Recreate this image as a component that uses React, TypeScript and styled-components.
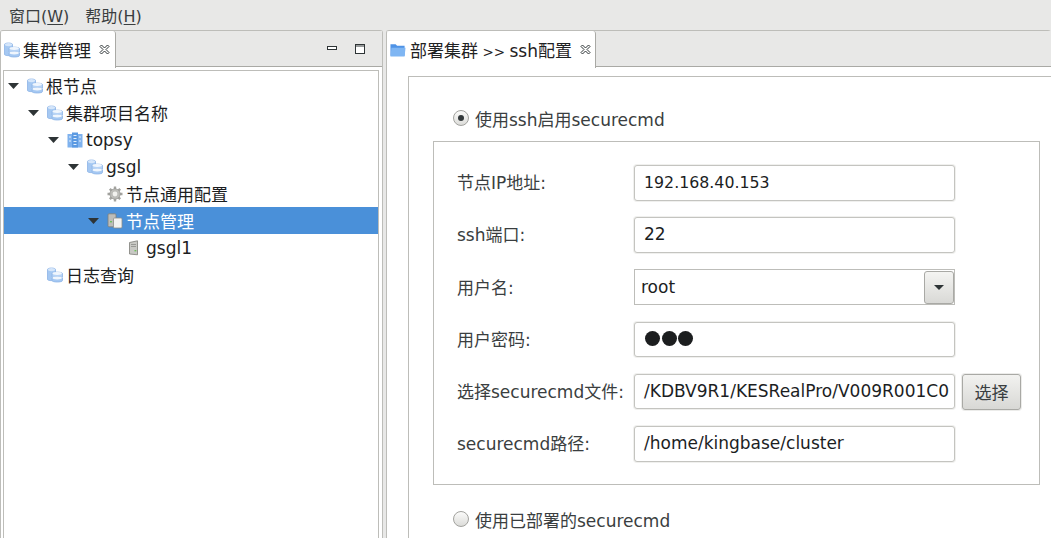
import React from "react";
import styled, { createGlobalStyle } from "styled-components";

const Global = createGlobalStyle`
  html, body { margin: 0; padding: 0; width: 1051px; height: 538px; overflow: hidden; background: #e8e8e7; }
  body { font-family: "DejaVu Sans", "Noto Sans CJK SC", sans-serif; font-size: 17px; color: #2e3436; }
`;

const Page = styled.div`
  display: flex; flex-direction: column; width: 1051px; height: 538px; overflow: hidden;
`;
const MenuBar = styled.div`
  display: flex; gap: 16px; height: 30px; padding-left: 9px; align-items: center; flex: none;
  font-size: 16px; color: #3a3e40;
  u { text-underline-offset: 2px; }
`;
const Panels = styled.div`
  flex: 1; display: flex; min-height: 0; gap: 3px;
`;
const Panel = styled.div<{ $w?: number }>`
  ${p => (p.$w ? `width: ${p.$w}px; flex: none;` : "flex: 1; min-width: 0;")}
  display: flex; flex-direction: column; border: 1px solid #bdbdb9; border-bottom: 0;
  border-radius: 3px 3px 0 0; background: #fff; position: relative; border-right-width: ${p => (p.$w ? 1 : 0)}px;
`;
const TabStrip = styled.div`
  display: flex; height: 36px; flex: none; background: #e8e8e7; align-items: stretch; position: relative;
`;
const Tab = styled.div<{ $w: number }>`
  width: ${p => p.$w}px; flex: none; background: #fff; display: flex; align-items: center; padding-left: 3px;
  border-right: 1px solid #a9a9a5; box-sizing: border-box; color: #1f2223; font-size: 17px; height: 37px;
  border-radius: 3px 3px 0 0; position: relative; z-index: 1; white-space: nowrap;
`;
const TabTitle = styled.span`
  word-spacing: -1px;
`;
const Arrows = styled.span`
  font-size: 13.5px;
`;
const StripRest = styled.div`
  flex: 1; border-bottom: 1px solid #a9a9a5; display: flex; justify-content: flex-end; align-items: center;
  gap: 18px; padding-right: 17px;
`;
const CloseWrap = styled.span`
  display: inline-flex; margin-left: 8px; margin-top: -1px;
`;
const TreeBox = styled.div`
  margin: 3px 3px 0 2px; flex: 1; border: 1px solid #bdbdb9; border-bottom: 0; background: #fff; padding-top: 1px;
`;
const Row = styled.div<{ $depth: number; $selected?: boolean }>`
  height: 27px; display: flex; align-items: center; padding-left: ${p => 3 + p.$depth * 20}px;
  background: ${p => (p.$selected ? "#4a90d9" : "transparent")};
  color: ${p => (p.$selected ? "#fff" : "#1c1e1f")}; font-size: 17px; white-space: nowrap;
`;
const Twist = styled.span`
  width: 12px; height: 6px; margin-right: 8px; flex: none; display: inline-flex; justify-content: center;
`;
const Spacer = styled.span`
  width: 20px; flex: none;
`;
const Glyph = styled.span`
  width: 16px; height: 16px; flex: none; margin-right: 3px; display: inline-flex;
`;
const TabGlyph = styled(Glyph)`
  margin-right: 4px;
`;
const Content = styled.div`
  flex: 1; min-height: 0; padding: 9px 0 0 21px; background: #fff; overflow: hidden;
`;
const Sheet = styled.div`
  width: 700px; height: 600px; border: 1px solid #bdbdb9; box-sizing: border-box; padding: 21px 0 0 24px;
`;
const RadioRow = styled.div<{ $mt?: number }>`
  display: flex; align-items: center; gap: 6px; height: 40px; padding-left: 21px; font-size: 17px; color: #3a3e40;
  margin-top: ${p => p.$mt ?? 0}px; white-space: nowrap;
`;
const Radio = styled.span<{ $on?: boolean }>`
  width: 16px; height: 16px; border-radius: 50%; border: 1px solid #a2a29e; box-sizing: border-box; flex: none; margin-left: -1px;
  background: linear-gradient(#fbfbfa, #dcdcd9); display: inline-flex; align-items: center; justify-content: center;
  &::after { content: ""; width: 6px; height: 6px; border-radius: 50%; background: ${p => (p.$on ? "#33393b" : "transparent")}; }
`;
const Group = styled.div`
  width: 607px; height: 344px; box-sizing: border-box; border: 1px solid #bdbdb9; margin-top: 3px;
  padding: 23px 0 0 23px; display: flex; flex-direction: column; gap: 16.6px;
`;
const FormRow = styled.div`
  display: flex; align-items: center; height: 35.6px; font-size: 17px; color: #3a3e40;
`;
const FieldLabel = styled.span`
  width: 177px; flex: none; white-space: nowrap; padding-bottom: 2px;
`;
const Input = styled.div<{ $numeric?: boolean }>`
  width: 321px; height: 100%; flex: none; box-sizing: border-box; border: 1px solid #c4c4c0; border-radius: 3px;
  box-shadow: 0 0 0 1px #f0f0ee; background: #fff; padding: 0 0 1px 9px; display: flex; align-items: center;
  font-size: ${p => (p.$numeric ? 15.8 : 17)}px; color: #1c1e1f; white-space: nowrap; overflow: hidden;
`;
const Select = styled(Input)`
  padding: 0 0 0 6px; justify-content: space-between; box-shadow: none;
  border-color: #bdbdb9; border-radius: 0;
`;
const Arrow = styled.div`
  width: 30px; height: 33px; border: 1px solid #a9a9a5; border-radius: 3px; box-sizing: border-box;
  background: linear-gradient(#f4f4f2, #d9d9d6); display: flex; align-items: center; justify-content: center;
`;
const Dots = styled.span`
  display: flex; gap: 1.5px; margin-left: 1px;
`;
const Dot = styled.span`
  width: 15px; height: 15px; border-radius: 50%; background: #1c1e1f;
`;
const PickButton = styled.div`
  width: 59px; height: 36px; margin-left: 7px; box-sizing: border-box; border: 1px solid #a9a9a5; border-radius: 3px;
  background: linear-gradient(#f2f2f0, #d8d8d5); display: flex; align-items: center; justify-content: center;
  font-size: 17px; color: #3a3e40; box-shadow: 0 0 0 1px #ececea;
`;

const Tri = () => (
  <svg width="11" height="6" viewBox="0 0 11 6"><path d="M0 0h11L5.5 6z" fill="#2e3436" /></svg>
);
const Cylinders = () => (
  <svg width="16" height="16" viewBox="0 0 16 16">
    <path d="M.5 2.500C.5 .5 8.500 .5 8.500 2.500V12.500C8.500 14 .5 14 .5 12.500z" fill="#a5c8f2" stroke="#8db4e6" strokeWidth=".8" />
    <ellipse cx="4.500" cy="2.600" rx="3.600" ry="1.600" fill="#d5e6fa" />
    <path d="M5 6.500C5 4.700 15.500 4.700 15.500 6.500v3.500C15.500 11.500 5 11.500 5 10z" fill="#b6d3f6" stroke="#8db4e6" strokeWidth=".8" />
    <ellipse cx="10.200" cy="6.500" rx="4.700" ry="1.400" fill="#f0f6fd" />
    <path d="M5 11C5 9.300 15.500 9.300 15.500 11v2.500C15.500 15.500 5 15.500 5 13.500z" fill="#a5c8f2" stroke="#8db4e6" strokeWidth=".8" />
    <ellipse cx="10.200" cy="11" rx="4.700" ry="1.400" fill="#f0f6fd" />
  </svg>
);
const Cluster = () => (
  <svg width="16" height="16" viewBox="0 0 16 16">
    <rect x=".5" y="2" width="15" height="13.500" fill="#7fb2ee" />
    <rect x="5" y=".5" width="6" height="15" fill="#5c9ae2" />
    <path d="M6.500 3.500h3M6.500 6.500h3M6.500 9.500h3M6.500 12.500h3M2 5h2M12 5h2M2 9h2M12 9h2" stroke="#e3effc" strokeWidth="1.200" />
  </svg>
);
const Gear = () => (
  <svg width="16" height="16" viewBox="0 0 16 16">
    <g stroke="#a3a39f" strokeWidth="2.400">
      <path d="M8 .5v15M.5 8h15M2.800 2.800l10.400 10.400M13.200 2.800L2.800 13.200" />
    </g>
    <circle cx="8" cy="8" r="5.200" fill="#bdbdb9" stroke="#8f8f8b" strokeWidth=".6" />
    <circle cx="8" cy="8" r="2.400" fill="#f2f2ef" />
  </svg>
);
const Servers = () => (
  <svg width="16" height="16" viewBox="0 0 16 16">
    <rect x="1" y=".8" width="8" height="13" rx="1" fill="#bdbdb9" stroke="#7d7d79" strokeWidth=".8" />
    <rect x="6.500" y="5" width="8.500" height="10" rx="1" fill="#f3f3f1" stroke="#8d8d89" strokeWidth=".8" />
    <rect x="3" y="8" width="2" height="1.400" fill="#6fbf5c" />
  </svg>
);
const Server = () => (
  <svg width="16" height="16" viewBox="0 0 16 16">
    <path d="M2.500 2.500 10.500 .8v14l-8-.8z" fill="#c9c9c5" stroke="#7d7d79" strokeWidth=".8" />
    <path d="M4 4.500h5M4 6.500h5" stroke="#8d8d89" strokeWidth=".8" />
    <rect x="7.500" y="10" width="1.800" height="1.400" fill="#6fbf5c" />
  </svg>
);
const Folder = () => (
  <svg width="17" height="16" viewBox="0 0 17 16">
    <path d="M.5 2h5.500l1.500 1.500H15.500V14H.5z" fill="#4f93e6" />
    <path d="M.5 15 1.500 5.500H16.500L15.500 15z" fill="#7fb6f3" />
  </svg>
);
const Close = () => (
  <svg width="11" height="11" viewBox="0 0 11 11" fill="none" stroke="#2e3436" strokeWidth="1">
    <path d="M1 2.500 2.500 1 5.500 4 8.500 1 10 2.500 7 5.500 10 8.500 8.500 10 5.500 7 2.500 10 1 8.500 4 5.500z" />
  </svg>
);
const Minimize = () => (
  <svg width="10" height="5" viewBox="0 0 10 5" fill="#fff" stroke="#2e3436"><rect x=".5" y=".5" width="9" height="3" /></svg>
);
const Maximize = () => (
  <svg width="10" height="10" viewBox="0 0 10 10" fill="#fff" stroke="#2e3436"><rect x=".5" y=".5" width="9" height="9" /><path d="M0 2h10" /></svg>
);

type Node = { depth: number; label: string; open?: boolean; icon: React.ReactNode; selected?: boolean };
const nodes: Node[] = [
  { depth: 0, label: "根节点", open: true, icon: <Cylinders /> },
  { depth: 1, label: "集群项目名称", open: true, icon: <Cylinders /> },
  { depth: 2, label: "topsy", open: true, icon: <Cluster /> },
  { depth: 3, label: "gsgl", open: true, icon: <Cylinders /> },
  { depth: 4, label: "节点通用配置", icon: <Gear /> },
  { depth: 4, label: "节点管理", open: true, icon: <Servers />, selected: true },
  { depth: 5, label: "gsgl1", icon: <Server /> },
  { depth: 1, label: "日志查询", icon: <Cylinders /> },
];

export default function App() {
  return (
    <Page>
      <Global />
      <MenuBar>
        <span>窗口(<u>W</u>)</span>
        <span>帮助(<u>H</u>)</span>
      </MenuBar>
      <Panels>
        <Panel $w={381}>
          <TabStrip>
            <Tab $w={115}>
              <Glyph><Cylinders /></Glyph><TabTitle>集群管理</TabTitle><CloseWrap><Close /></CloseWrap>
            </Tab>
            <StripRest><Minimize /><Maximize /></StripRest>
          </TabStrip>
          <TreeBox>
            {nodes.map(n => (
              <Row key={n.label} $depth={n.depth} $selected={n.selected}>
                {n.open ? <Twist><Tri /></Twist> : <Spacer />}
                <Glyph>{n.icon}</Glyph>
                {n.label}
              </Row>
            ))}
          </TreeBox>
        </Panel>
        <Panel>
          <TabStrip>
            <Tab $w={209}>
              <TabGlyph><Folder /></TabGlyph>
              <TabTitle>部署集群 <Arrows>&gt;&gt;</Arrows> ssh配置</TabTitle>
              <CloseWrap><Close /></CloseWrap>
            </Tab>
            <StripRest />
          </TabStrip>
          <Content>
            <Sheet>
              <RadioRow><Radio $on />使用ssh启用securecmd</RadioRow>
              <Group>
                <FormRow><FieldLabel>节点IP地址:</FieldLabel><Input $numeric>192.168.40.153</Input></FormRow>
                <FormRow><FieldLabel>ssh端口:</FieldLabel><Input>22</Input></FormRow>
                <FormRow>
                  <FieldLabel>用户名:</FieldLabel>
                  <Select>root<Arrow><svg width="10" height="5" viewBox="0 0 10 5"><path d="M0 0h10L5 5z" fill="#2e3436" /></svg></Arrow></Select>
                </FormRow>
                <FormRow>
                  <FieldLabel>用户密码:</FieldLabel>
                  <Input><Dots><Dot /><Dot /><Dot /></Dots></Input>
                </FormRow>
                <FormRow>
                  <FieldLabel>选择securecmd文件:</FieldLabel>
                  <Input>/KDBV9R1/KESRealPro/V009R001C0</Input>
                  <PickButton>选择</PickButton>
                </FormRow>
                <FormRow><FieldLabel>securecmd路径:</FieldLabel><Input>/home/kingbase/cluster</Input></FormRow>
              </Group>
              <RadioRow $mt={14}><Radio />使用已部署的securecmd</RadioRow>
            </Sheet>
          </Content>
        </Panel>
      </Panels>
    </Page>
  );
}
